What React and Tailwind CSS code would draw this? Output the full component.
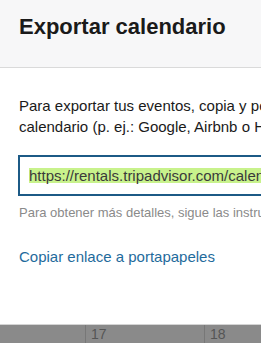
const App = () => {
  return (
    <div className="w-[261px] h-[343px] overflow-hidden flex flex-col bg-white font-['Liberation_Sans',Arial,sans-serif]">
      <header className="h-[68px] shrink-0 bg-[#f7f7f8] border-b border-[#dadada] px-[19px] pt-[14px]">
        <h1 className="text-[22px] leading-[26px] font-bold text-[#1a1a1a] whitespace-nowrap">Exportar calendario</h1>
      </header>
      <div className="flex flex-col pl-[18px] pt-[27px]">
        <p className="text-[15px] leading-[21px] text-[#1a1a1a] whitespace-nowrap pl-[1px]">
          Para exportar tus eventos, copia y pega este enlace en tu
          <br />
          calendario (p. ej.: Google, Airbnb o HomeAway).
        </p>
        <div className="mt-[18px] w-[420px] h-[41px] border-2 border-[#1c5a86] flex items-center pl-[9px]">
          <span className="bg-[#c8f28c] text-[15px] leading-[15px] text-[#3a3a3a] whitespace-nowrap">
            https://rentals.tripadvisor.com/calendar/ical/export
          </span>
        </div>
        <p className="mt-[9px] pl-[1px] text-[13px] leading-[16px] text-[#8a8a8a] whitespace-nowrap">
          Para obtener más detalles, sigue las instrucciones de tu calendario.
        </p>
        <a className="mt-[26px] pl-[1px] text-[15px] leading-[20px] text-[#1f6b9c] whitespace-nowrap">
          Copiar enlace a portapapeles
        </a>
      </div>
      <div className="mt-auto h-[19px] shrink-0 bg-[#8a8a8a] border-t border-[#d4d4d4] flex">
        <div className="w-[86px] border-r border-[#777]"></div>
        <div className="w-[119px] border-r border-[#777] pl-[5px] text-[14px] leading-[18px] text-[#555]">17</div>
        <div className="flex-1 pl-[5px] text-[14px] leading-[18px] text-[#555]">18</div>
      </div>
    </div>
  );
};

export default App;
